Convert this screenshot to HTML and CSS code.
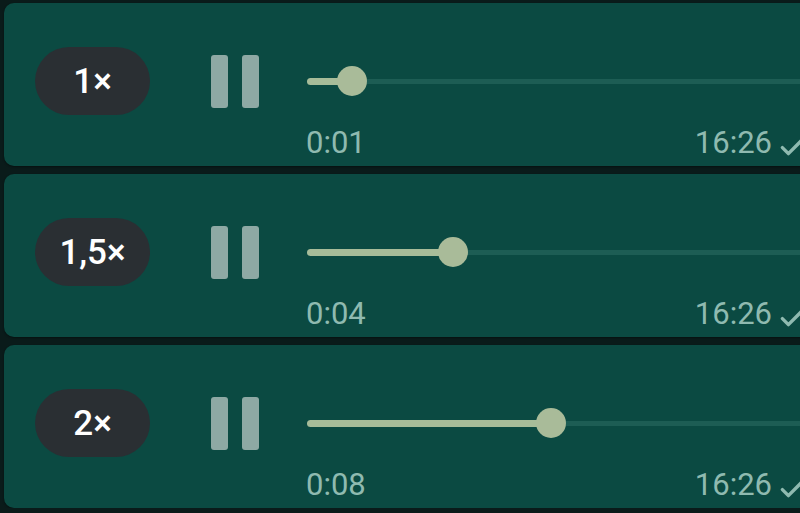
FILE: index.html
```html
<!DOCTYPE html>
<html lang="en">
<head>
    <meta charset="UTF-8">
    <meta name="viewport" content="width=device-width, initial-scale=1.0">
    <title>Voice messages</title>
    <link rel="stylesheet" href="styles.css">
</head>
<body>
    <div class="chat">
        <!-- voice note at normal speed -->
        <div class="bubble">
            <div class="player">
                <div class="speed">1×</div>
                <div class="pause"><span></span><span></span></div>
                <div class="slider">
                    <div class="fill" style="width: 45px"></div>
                    <div class="knob" style="left: 45px"></div>
                </div>
            </div>
            <div class="meta">
                <span class="elapsed">0:01</span>
                <span class="sent">16:26
                    <svg class="tick" viewBox="0 0 20 16"><path d="M2 8.5l5 5L18 2.5"/></svg>
                </span>
            </div>
        </div>

        <div class="bubble">
            <div class="player">
                <div class="speed">1,5×</div>
                <div class="pause"><span></span><span></span></div>
                <div class="slider">
                    <div class="fill" style="width: 146px"></div>
                    <div class="knob" style="left: 146px"></div>
                </div>
            </div>
            <div class="meta">
                <span class="elapsed">0:04</span>
                <span class="sent">16:26
                    <svg class="tick" viewBox="0 0 20 16"><path d="M2 8.5l5 5L18 2.5"/></svg>
                </span>
            </div>
        </div>

        <div class="bubble">
            <div class="player">
                <div class="speed">2×</div>
                <div class="pause"><span></span><span></span></div>
                <div class="slider">
                    <div class="fill" style="width: 244px"></div>
                    <div class="knob" style="left: 244px"></div>
                </div>
            </div>
            <div class="meta">
                <span class="elapsed">0:08</span>
                <span class="sent">16:26
                    <svg class="tick" viewBox="0 0 20 16"><path d="M2 8.5l5 5L18 2.5"/></svg>
                </span>
            </div>
        </div>
    </div>
</body>
</html>
```

FILE: styles.css
```css
body {
    margin: 0;
    background-color: #0a1b1a;
    font-family: Roboto, "Noto Sans", sans-serif;
    overflow: hidden;
}
.chat {
    display: flex;
    flex-direction: column;
    gap: 8px;
    padding: 3px 0 0 4px;
}
.bubble {
    width: 840px;
    height: 163px;
    box-sizing: border-box;
    padding: 44px 0 0 31px;
    background-color: #0b4a42;
    border-radius: 10px;
    box-shadow: 0 1px 2px rgba(0,0,0,0.4);
}
.player {
    display: flex;
    align-items: center;
    height: 68px;
}
.speed {
    width: 115px;
    height: 68px;
    border-radius: 34px;
    background-color: #2a2f33;
    color: #fff;
    font-size: 35px;
    font-weight: 500;
    display: flex;
    align-items: center;
    justify-content: center;
}
.pause {
    display: flex;
    gap: 14px;
    margin-left: 61px;
}
.pause span {
    width: 17px;
    height: 53px;
    border-radius: 3px;
    background-color: #8ea9a4;
}
.slider {
    flex: 1;
    margin-left: 48px;
    height: 5px;
    border-radius: 3px;
    background-color: #1d5d54;
    position: relative;
}
.fill {
    position: absolute;
    top: -1px;
    left: 0;
    height: 7px;
    border-radius: 4px;
    background-color: #a7bc99;
}
.knob {
    position: absolute;
    top: 50%;
    width: 30px;
    height: 30px;
    margin: -15px 0 0 -15px;
    border-radius: 50%;
    background-color: #a9bb99;
}
.meta {
    display: flex;
    justify-content: space-between;
    margin: 10px 0 0 271px;
    padding-right: 40px;
    font-size: 31px;
    line-height: 36px;
    color: #8fbab0;
}
.sent {
    display: flex;
    align-items: center;
    gap: 8px;
}
.tick {
    flex-shrink: 0;
    width: 24px;
    height: 20px;
    margin-top: 8px;
    fill: none;
    stroke: #8fbab0;
    stroke-width: 2.8;
    stroke-linecap: round;
    stroke-linejoin: round;
}
```
